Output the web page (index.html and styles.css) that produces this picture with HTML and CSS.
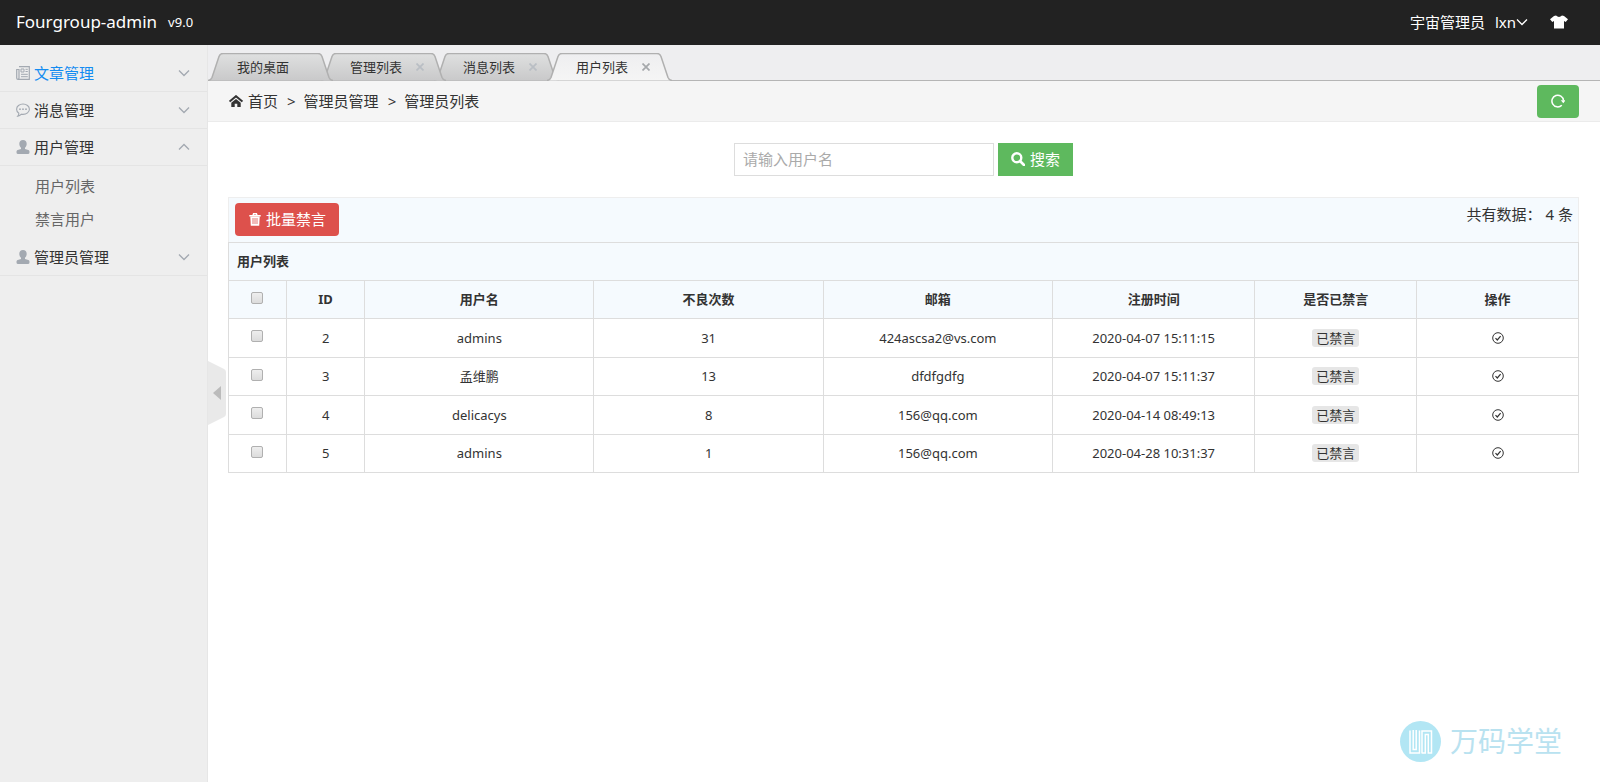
FILE: index.html
```
<!DOCTYPE html>
<html lang="zh-CN">
<head>
<meta charset="utf-8">
<title>Fourgroup-admin v9.0</title>
<link rel="stylesheet" href="styles.css">
</head>
<body>
<svg class="sprite" aria-hidden="true">
  <symbol id="i-down" viewBox="0 0 12 12"><path d="M1 3.5l5 5 5-5" fill="none" stroke="currentColor" stroke-width="1.3"/></symbol>
  <symbol id="i-up" viewBox="0 0 12 12"><path d="M1 8.5l5-5 5 5" fill="none" stroke="currentColor" stroke-width="1.3"/></symbol>
  <symbol id="i-user" viewBox="0 0 14 14"><path d="M7 0c2.300 0 3.700 1.600 3.700 3.800 0 1.600-.7 3.100-1.700 4v1.100l3.300 1.200c.9.400 1.200 1 1.200 1.900 0 1.300-.3 2-1.300 2H1.800c-1 0-1.300-.7-1.300-2 0-.9.300-1.500 1.200-1.900L5 8.900V7.800c-1-.9-1.700-2.400-1.700-4C3.300 1.600 4.700 0 7 0z" fill="currentColor"/></symbol>
  <symbol id="i-x" viewBox="0 0 8 8"><path d="M.5 .5l7 7M7.500 .5L.5 7.500" fill="none" stroke="currentColor" stroke-width="1.700"/></symbol>
  <symbol id="i-check" viewBox="0 0 12 12"><circle cx="6" cy="6" r="5.300" fill="none" stroke="currentColor"/><path d="M3.500 6.200l1.800 1.800 3.300-3.800" fill="none" stroke="currentColor" stroke-width="1.200"/></symbol>
  <symbol id="i-tab" viewBox="0 0 125 28"><path d="M0 27.500Q3 27 4 24.500L11 3.500Q12 .5 15 .5H110Q113 .5 114 3.500L121 24.500Q122 27 125 27.500" stroke="#b0b0b0" stroke-width="1.500"/></symbol>
</svg>
<svg class="sprite" aria-hidden="true"><defs>
  <linearGradient id="g-tab" x1="0" y1="0" x2="0" y2="1"><stop offset="0" stop-color="#dfe0e0"/><stop offset="1" stop-color="#c9c9ca"/></linearGradient>
  <linearGradient id="g-active" x1="0" y1="0" x2="0" y2="1"><stop offset="0" stop-color="#eeeef0"/><stop offset="1" stop-color="#f5f5f5"/></linearGradient>
</defs></svg>

<header class="navbar">
  <a class="logo" href="#">Fourgroup-admin</a>
  <span class="version">v9.0</span>
  <nav class="userbar">
    <span>宇宙管理员</span>
    <a class="account" href="#">lxn<svg class="icon12"><use href="#i-down"/></svg></a>
    <a class="skin" href="#" aria-label="换肤"><svg width="18" height="14" viewBox="0 0 18 14"><path d="M6 .6Q9 3.200 12 .6L14 .9 18 4.300 15.700 7 14 5.900V13.400H4V5.900L2.300 7 0 4.300 4 .9z" fill="#fff"/></svg></a>
  </nav>
</header>

<div class="shell">
  <aside class="sidebar">
    <a class="menu-head current" href="#">
      <svg class="icon14" viewBox="0 0 14 14"><path d="M3 .7h10.300v12.600H2Q.7 13.300.7 12V3.500H3V12q0 1.300-1.200 1.300" fill="none" stroke="currentColor" stroke-width="1.200"/><path d="M5 3h3v3H5zM9.500 3.300h2.300M9.500 5.500h2.300M5 8.300h6.800M5 10.700h6.800" fill="none" stroke="currentColor"/></svg>
      <span>文章管理</span><svg class="icon12"><use href="#i-down"/></svg>
    </a>
    <a class="menu-head" href="#">
      <svg class="icon14" viewBox="0 0 14 14"><path d="M7 1c3.500 0 6.400 2.300 6.400 5.200S10.500 11.400 7 11.400q-.8 0-1.600-.2Q3.800 13 1.800 13.200q1.200-1.300 1-2.900Q.6 8.700.6 6.200C.6 3.300 3.500 1 7 1z" fill="none" stroke="currentColor" stroke-width="1.100"/><circle cx="4" cy="6.200" r=".9" fill="currentColor"/><circle cx="7" cy="6.200" r=".9" fill="currentColor"/><circle cx="10" cy="6.200" r=".9" fill="currentColor"/></svg>
      <span>消息管理</span><svg class="icon12"><use href="#i-down"/></svg>
    </a>
    <a class="menu-head" href="#">
      <svg class="icon14"><use href="#i-user"/></svg>
      <span>用户管理</span><svg class="icon12"><use href="#i-up"/></svg>
    </a>
    <ul class="submenu">
      <li><a href="#">用户列表</a></li>
      <li><a href="#">禁言用户</a></li>
    </ul>
    <a class="menu-head" href="#">
      <svg class="icon14"><use href="#i-user"/></svg>
      <span>管理员管理</span><svg class="icon12"><use href="#i-down"/></svg>
    </a>
  </aside>

  <main class="main">
    <button class="collapse" type="button" aria-label="收起菜单"><svg width="18" height="64" viewBox="0 0 18 64"><path d="M0 0L16 8Q18 9 18 11V53Q18 55 16 56L0 64z" fill="#e9e9e9"/><path d="M5 32l8-7v14z" fill="#bbb"/></svg></button>

    <ul class="tabs">
      <li class="tab"><svg class="tab-shape"><use href="#i-tab"/></svg><span class="tab-label">我的桌面</span></li>
      <li class="tab"><svg class="tab-shape"><use href="#i-tab"/></svg><span class="tab-label">管理列表<button type="button" class="tab-close" aria-label="关闭"><svg><use href="#i-x"/></svg></button></span></li>
      <li class="tab"><svg class="tab-shape"><use href="#i-tab"/></svg><span class="tab-label">消息列表<button type="button" class="tab-close" aria-label="关闭"><svg><use href="#i-x"/></svg></button></span></li>
      <li class="tab active"><svg class="tab-shape"><use href="#i-tab"/></svg><span class="tab-label">用户列表<button type="button" class="tab-close" aria-label="关闭"><svg><use href="#i-x"/></svg></button></span></li>
    </ul>

    <nav class="breadcrumb">
      <svg width="14" height="12" viewBox="0 0 14 12"><path d="M.6 6.600L7 1.200l6.400 5.400" fill="none" stroke="#333" stroke-width="2"/><path d="M2.300 7.800L7 3.900l4.700 3.900V12H8.300V8.700H5.700V12H2.300z" fill="#333"/></svg>
      <span class="home">首页</span><span class="sep">&gt;</span><span>管理员管理</span><span class="sep">&gt;</span><span>管理员列表</span>
      <a class="refresh" href="#" aria-label="刷新"><svg width="14" height="14" viewBox="0 0 14 14"><path d="M10.800 11.200A5.800 5.800 0 1 1 12.500 6.500" fill="none" stroke="#fff" stroke-width="1.500"/><path d="M9.800 6.200H14.500L12.300 9.300z" fill="#fff"/></svg></a>
    </nav>

    <section class="page">
      <form class="search">
        <input type="text" placeholder="请输入用户名" aria-label="用户名">
        <button type="button"><svg width="14" height="14" viewBox="0 0 14 14"><circle cx="5.800" cy="5.800" r="4.500" fill="none" stroke="#fff" stroke-width="2.400"/><path d="M9 9l4 4" stroke="#fff" stroke-width="2.600" stroke-linecap="round"/></svg>搜索</button>
      </form>

      <div class="toolbar">
        <button class="danger" type="button"><svg width="12" height="13" viewBox="0 0 12 13"><path d="M.3 2.800h11.400M4 2.500L4.600.8h2.800L8 2.500" fill="none" stroke="#fff" stroke-width="1.500"/><path d="M1.300 3.500h9.400l-.5 9.200H1.800z" fill="#fff"/><path d="M4 5v6M6 5v6M8 5v6" stroke="#dd514c" stroke-width=".8"/></svg>批量禁言</button>
        <span class="total">共有数据：&nbsp;<b>4</b> 条</span>
      </div>

      <table class="grid">
        <colgroup><col class="c-check"><col class="c-id"><col class="c-wide"><col class="c-wide"><col class="c-wide"><col class="c-time"><col class="c-state"><col class="c-state"></colgroup>
        <thead>
          <tr><th class="title" colspan="8">用户列表</th></tr>
          <tr><th><input type="checkbox" aria-label="全选"></th><th>ID</th><th>用户名</th><th>不良次数</th><th>邮箱</th><th>注册时间</th><th>是否已禁言</th><th>操作</th></tr>
        </thead>
        <tbody>
          <tr><td><input type="checkbox" aria-label="选择 2"></td><td>2</td><td>admins</td><td>31</td><td>424ascsa2@vs.com</td><td>2020-04-07 15:11:15</td><td><span class="label">已禁言</span></td><td><a href="#" aria-label="启用"><svg class="icon12"><use href="#i-check"/></svg></a></td></tr>
          <tr><td><input type="checkbox" aria-label="选择 3"></td><td>3</td><td>孟维鹏</td><td>13</td><td>dfdfgdfg</td><td>2020-04-07 15:11:37</td><td><span class="label">已禁言</span></td><td><a href="#" aria-label="启用"><svg class="icon12"><use href="#i-check"/></svg></a></td></tr>
          <tr><td><input type="checkbox" aria-label="选择 4"></td><td>4</td><td>delicacys</td><td>8</td><td>156@qq.com</td><td>2020-04-14 08:49:13</td><td><span class="label">已禁言</span></td><td><a href="#" aria-label="启用"><svg class="icon12"><use href="#i-check"/></svg></a></td></tr>
          <tr><td><input type="checkbox" aria-label="选择 5"></td><td>5</td><td>admins</td><td>1</td><td>156@qq.com</td><td>2020-04-28 10:31:37</td><td><span class="label">已禁言</span></td><td><a href="#" aria-label="启用"><svg class="icon12"><use href="#i-check"/></svg></a></td></tr>
        </tbody>
      </table>
    </section>
  </main>
</div>

<div class="watermark">
  <svg width="41" height="41" viewBox="0 0 41 41"><circle cx="20.500" cy="20.500" r="20.500" fill="#b2e6f4"/><path d="M10 9.500V32h9.500V9.500M13.200 9v19.500h3V9M22 32.500V10h9.500v22h-3.200V13.500h-3V32H22" fill="none" stroke="#fff" stroke-width="1.500"/></svg>
  <span>万码学堂</span>
</div>
</body>
</html>
```
FILE: styles.css
```
* { box-sizing: border-box; }
body {
  margin: 0;
  min-height: 100vh;
  display: flex;
  flex-direction: column;
  position: relative;
  background: #fff;
  color: #333;
  font: 15px/22px "Noto Sans", "Noto Sans CJK SC", sans-serif;
}
a { color: inherit; text-decoration: none; }
ul { margin: 0; padding: 0; list-style: none; }
button, input { font: inherit; margin: 0; }
svg { display: block; flex: none; }
.sprite { position: absolute; width: 0; height: 0; }
.icon12 { width: 12px; height: 12px; }
.icon14 { width: 14px; height: 14px; }

.navbar {
  display: flex;
  align-items: center;
  height: 45px;
  padding: 0 32px 2px 16px;
  background: #222;
  color: #fff;
}
.logo { font-size: 17px; }
.version { margin-left: 11px; font-size: 13px; }
.userbar { display: flex; align-items: center; gap: 10px; margin-left: auto; }
.account { display: flex; align-items: center; }
.skin { margin-left: 12px; }

.shell { flex: 1; display: flex; }
.sidebar {
  flex: none;
  width: 208px;
  padding-top: 10px;
  background: #eee;
  border-right: 1px solid #e6e6e6;
}
.menu-head {
  display: flex;
  align-items: center;
  height: 37px;
  padding: 0 17px 0 16px;
  border-bottom: 1px solid #e4e4e4;
  color: #333;
}
.menu-head svg { color: #a3a9b1; }
.menu-head span { flex: 1; margin-left: 4px; }
.current span { color: #148cf1; }
.submenu { padding: 4px 0 3px 35px; color: #666; }
.submenu a { display: block; line-height: 33px; }

.main { flex: 1; min-width: 0; position: relative; }
.collapse {
  position: absolute;
  left: 0;
  top: 316px;
  padding: 0;
  border: 0;
  background: none;
}
.tabs {
  display: flex;
  height: 36px;
  padding-top: 8px;
  background: #eeeef0;
  border-bottom: 1px solid #b5b5b5;
}
.tab { display: grid; width: 125px; height: 28px; position: relative; z-index: 3; }
.tab + .tab { margin-left: -12px; z-index: 2; }
.tab + .tab + .tab { z-index: 1; }
.tab + .tab.active { z-index: 4; }
.tab-shape { grid-area: 1 / 1; width: 125px; height: 28px; fill: url(#g-tab); }
.active .tab-shape { fill: url(#g-active); }
.tab-label {
  grid-area: 1 / 1;
  display: flex;
  align-items: center;
  gap: 14px;
  padding-left: 29px;
  font-size: 13px;
}
.tab-close { padding: 0; border: 0; background: none; color: #b9bec4; }
.tab-close svg { width: 8px; height: 8px; }
.active .tab-close { color: #a5a8ab; }

.breadcrumb {
  display: flex;
  align-items: center;
  height: 41px;
  padding: 0 21px 0 21px;
  background: #f5f5f5;
  border-bottom: 1px solid #ebebeb;
}
.home { margin-left: 5px; }
.sep { margin: 0 8px 0 9px; }
.refresh {
  display: grid;
  place-items: center;
  width: 42px;
  height: 33px;
  margin-left: auto;
  border-radius: 4px;
  background: #5eb95e;
}

.page { padding: 21px 21px 20px 20px; }
.search { display: flex; justify-content: center; gap: 4px; margin-bottom: 21px; }
.search input {
  width: 260px;
  height: 33px;
  padding: 0 8px 1px;
  border: 1px solid #ddd;
  color: #333;
}
.search input::placeholder { color: #aaa; }
.search button, .danger {
  display: flex;
  align-items: center;
  gap: 5px;
  height: 33px;
  padding: 0 13px 1px;
  border: 0;
  color: #fff;
  background: #5eb95e;
}
.toolbar {
  display: flex;
  justify-content: space-between;
  align-items: flex-start;
  padding: 5px 5px 5px 6px;
  height: 45px;
  background: #f5fafe;
  border: 1px solid #eee;
  border-bottom: 0;
}
.danger { border-radius: 4px; padding: 0 13px 1px 14px; background: #dd514c; }
.total { line-height: 22px; }
.total b { font-weight: 400; }

.grid {
  width: 100%;
  height: 231px;
  table-layout: fixed;
  border-collapse: collapse;
  font-size: 13px;
  line-height: 20px;
}
.grid th, .grid td { height: 38px; padding: 0 8px; border: 1px solid #ddd; text-align: center; }
.grid th { padding-bottom: 1px; background: #f5fafe; font-weight: 700; }
.grid .title { text-align: left; }
.grid svg { margin: 0 auto; }
.c-check { width: 4.300%; }
.c-id { width: 5.800%; }
.c-wide { width: 17%; }
.c-time { width: 15%; }
.c-state { width: 12%; }
.grid input {
  appearance: none;
  display: block;
  width: 12px;
  height: 12px;
  margin: 0 auto 3px;
  border: 1px solid #b0b0b0;
  border-radius: 2px;
  background: linear-gradient(#eee, #dcdcdc);
}
.label {
  display: inline-block;
  padding: 0 4px;
  border-radius: 3px;
  background: #e6e6e6;
  line-height: 18px;
}

.watermark {
  position: absolute;
  right: 38px;
  bottom: 20px;
  display: flex;
  align-items: center;
  gap: 9px;
  color: #b9e2f0;
  font-size: 28px;
  line-height: 41px;
}
```
